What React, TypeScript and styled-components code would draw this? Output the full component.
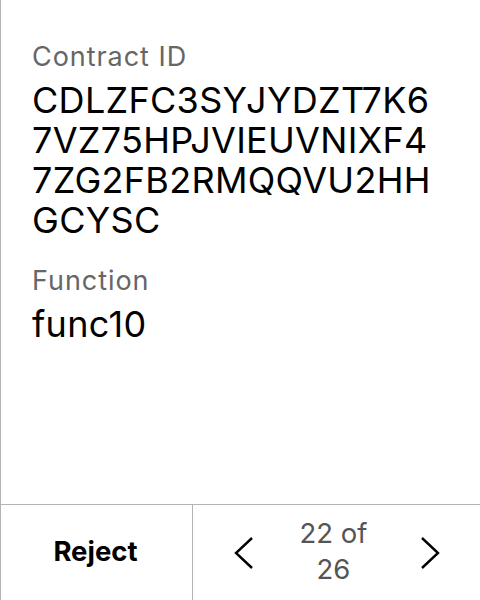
import React from "react";
import styled, { createGlobalStyle } from "styled-components";

const Global = createGlobalStyle`
  html, body { margin: 0; padding: 0; background: #fff; }
  body { font-family: Inter, "Noto Sans", sans-serif; }
  #root { height: 600px; }
`;

const Screen = styled.div`
  height: 600px;
  width: 480px;
  box-sizing: border-box;
  border-left: 1px solid #b3b3b3;
  display: flex;
  flex-direction: column;
`;

const Content = styled.div`
  flex: 1;
  padding: 40px 32px 0 31px;
  display: flex;
  flex-direction: column;
  gap: 24px;
`;

const Field = styled.div`
  display: flex;
  flex-direction: column;
  gap: 6px;
`;

const Label = styled.div`
  font-size: 27px;
  line-height: 34px;
  letter-spacing: 0.95px;
  color: #666;
`;

const Value = styled.div`
  font-size: 36px;
  line-height: 40px;
  letter-spacing: 0.3px;
  color: #000;
`;

const Footer = styled.div`
  height: 95px;
  border-top: 1px solid #b3b3b3;
  display: flex;
`;

const RejectCell = styled.button`
  width: 192px;
  border: none;
  border-right: 1px solid #b3b3b3;
  background: none;
  font-family: inherit;
  font-size: 27.5px;
  line-height: 34px;
  font-weight: 700;
  color: #000;
  padding: 0 2px 4px 0;
`;

const Pager = styled.div`
  flex: 1;
  display: flex;
  align-items: center;
  justify-content: space-between;
  padding: 0 40px 0 41px;
`;

const Arrow = styled.button`
  width: 20px;
  height: 32px;
  border: none;
  background: none;
  padding: 0;
  display: flex;
  align-items: center;
  justify-content: center;
`;

const Count = styled.div`
  font-size: 27.5px;
  line-height: 36px;
  color: #555;
  text-align: center;
  width: 84px;
  margin: -4px 7px 0 0;
`;

export default function App() {
  return (
    <>
      <Global />
      <Screen>
        <Content>
          <Field>
            <Label>Contract ID</Label>
            <Value>
              CDLZFC3SYJYDZT7K6
              <br />
              7VZ75HPJVIEUVNIXF4
              <br />
              7ZG2FB2RMQQVU2HH
              <br />
              GCYSC
            </Value>
          </Field>
          <Field>
            <Label>Function</Label>
            <Value>func10</Value>
          </Field>
        </Content>
        <Footer>
          <RejectCell>Reject</RejectCell>
          <Pager>
            <Arrow aria-label="Previous">
              <svg width="20" height="32" viewBox="0 0 20 32">
                <path d="M18 1 L2 16 L18 31" fill="none" stroke="#000" strokeWidth="2.4" />
              </svg>
            </Arrow>
            <Count>22 of 26</Count>
            <Arrow aria-label="Next">
              <svg width="20" height="32" viewBox="0 0 20 32">
                <path d="M2 1 L18 16 L2 31" fill="none" stroke="#000" strokeWidth="2.4" />
              </svg>
            </Arrow>
          </Pager>
        </Footer>
      </Screen>
    </>
  );
}
